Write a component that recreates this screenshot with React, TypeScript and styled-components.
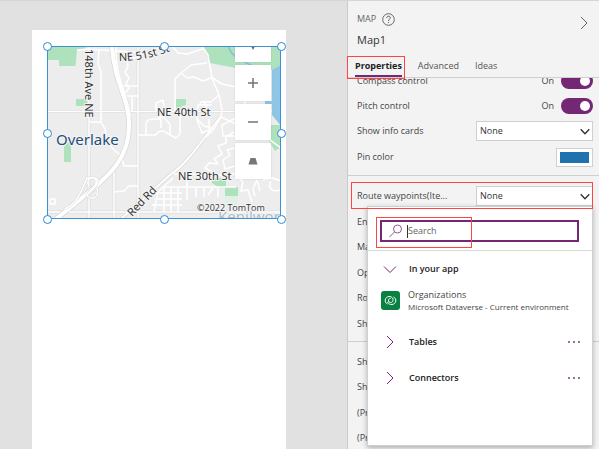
import React from "react";
import styled, { createGlobalStyle, css } from "styled-components";

const GlobalStyle = createGlobalStyle`
  *, *::before, *::after { box-sizing: border-box; }
  body {
    margin: 0;
    font-family: "Open Sans", "Noto Sans", sans-serif;
    font-size: 9px;
    line-height: 16px;
    color: #444;
  }
  button, input, select { font: inherit; color: inherit; margin: 0; }
`;

const purple = "#742774";

const Studio = styled.div`
  display: flex;
  height: 100vh;
  overflow: hidden;
  border-top: 1px solid #d6d6d6;
  background: #e1e1e1;
`;

const Canvas = styled.main`
  flex: 1;
  min-width: 0;
  display: flex;
  padding: 29px 61px 0 32px;
`;

const Screen = styled.section`
  flex: 1;
  min-width: 0;
  padding: 16px 5px 0 15px;
  background: #fff;
`;

const MapControl = styled.div`
  position: relative;
  aspect-ratio: 234 / 173;
`;

const MapView = styled.div`
  position: absolute;
  inset: 0;
  overflow: hidden;
  background: #ededed;
`;

const MapDrawing = styled.svg`
  display: block;
  width: 100%;
  height: 100%;
`;

const MapButtons = styled.div`
  position: absolute;
  top: -20px;
  right: 10px;
  display: flex;
  flex-direction: column;
  gap: 3px;
`;

const MapButton = styled.button`
  display: flex;
  align-items: center;
  justify-content: center;
  width: 36px;
  height: 36px;
  padding: 0;
  border: 0;
  background: #fff;
  box-shadow: 0 0 2px rgba(0, 0, 0, 0.12);
`;

const Outline = styled.div`
  position: absolute;
  inset: 0;
  border: 1px solid #3a92d8;
`;

const Handle = styled.span<{ $x: number; $y: number }>`
  position: absolute;
  left: ${(p) => p.$x}%;
  top: ${(p) => p.$y}%;
  width: 9px;
  height: 9px;
  margin: -4px;
  border: 1px solid #2b88d8;
  border-radius: 50%;
  background: #fff;
`;

const Panel = styled.aside`
  display: flex;
  flex-direction: column;
  width: 252px;
  border-left: 1px solid #cacaca;
  background: #f3f3f3;
`;

const PanelHeader = styled.header`
  display: flex;
  justify-content: space-between;
  padding: 9px 11px 0 9px;
`;

const KindLine = styled.div`
  display: flex;
  align-items: center;
  gap: 6px;
  height: 18px;
  color: #666;
`;

const ControlName = styled.h1`
  margin: 3px 0 0;
  font-size: 11px;
  line-height: 18px;
  font-weight: 400;
  color: #333;
`;

const IconButton = styled.button`
  display: flex;
  align-items: center;
  padding: 0;
  border: 0;
  background: none;
`;

const CollapseButton = styled(IconButton)`
  align-self: flex-start;
  height: 26px;
`;

const Highlight = styled.div`
  position: relative;
  &::after {
    content: "";
    position: absolute;
    z-index: 3;
    border: 1px solid #f44;
    pointer-events: none;
  }
`;

const Tabs = styled.nav`
  display: flex;
  gap: 16px;
  padding: 7px;
  padding-bottom: 0;
  border-bottom: 1px solid #cfcfcf;
`;

const TabHighlight = styled(Highlight)`
  &::after { inset: 0 -3px -2px -8px; }
`;

const Tab = styled.button<{ $active?: boolean }>`
  display: block;
  height: 21px;
  padding: 0;
  border: 0;
  border-bottom: 2px solid ${(p) => (p.$active ? purple : "transparent")};
  background: none;
  line-height: 19px;
  font-weight: ${(p) => (p.$active ? 700 : 400)};
  color: ${(p) => (p.$active ? "#222" : "#555")};
`;

const Scroller = styled.div`
  flex: 1;
  min-height: 0;
  overflow: hidden;
`;

const Group = styled.div<{ $scrolled?: boolean }>`
  padding: ${(p) => (p.$scrolled ? "0" : "7px")} 6px 5px 9px;
  border-bottom: 1px solid #cfcfcf;
  ${(p) => p.$scrolled && css`margin-top: -10px;`}
`;

const Row = styled.div<{ $tall?: boolean }>`
  display: flex;
  align-items: center;
  justify-content: space-between;
  height: ${(p) => (p.$tall ? 26 : 25)}px;
  white-space: nowrap;
`;

const RowHighlight = styled(Highlight)`
  &::after { inset: -1px 0 0 -6px; }
`;

const SwitchSide = styled.span`
  display: flex;
  align-items: center;
  gap: 7px;
`;

const Switch = styled.input`
  appearance: none;
  display: flex;
  align-items: center;
  justify-content: flex-end;
  width: 32px;
  height: 16px;
  padding: 3px;
  border-radius: 8px;
  background: ${purple};
  &::before {
    content: "";
    width: 10px;
    height: 10px;
    border-radius: 50%;
    background: #fff;
  }
`;

const SelectBox = styled.span`
  display: grid;
  width: 117px;
  height: 20px;
  align-items: center;
  > * { grid-area: 1 / 1; }
  > svg { justify-self: end; margin-right: 3px; pointer-events: none; }
`;

const Select = styled.select`
  appearance: none;
  width: 100%;
  height: 20px;
  padding: 0 3px;
  border: 1px solid #cfcfcf;
  border-radius: 0;
  background: #fff;
  color: #333;
`;

const ColorButton = styled.button`
  width: 37px;
  height: 19px;
  padding: 3px;
  border: 1px solid #cfcfcf;
  background: #fff;
  &::before {
    content: "";
    display: block;
    height: 100%;
    background: #1f72ad;
  }
`;

const Flyout = styled.div`
  position: absolute;
  z-index: 2;
  top: 23px;
  left: 10px;
  right: 0;
  height: 240px;
  border: 1px solid #d0d0d0;
  background: #fff;
  box-shadow: 0 2px 5px rgba(0, 0, 0, 0.28);
`;

const SearchArea = styled.div`
  padding: 13px 13px 8px 12px;
  border-bottom: 1px solid #d8d8d8;
`;

const SearchHighlight = styled(Highlight)`
  &::after { inset: -3px auto -6px -4px; width: 96px; }
`;

const SearchField = styled.label`
  display: flex;
  align-items: center;
  height: 22px;
  padding: 0 7px;
  border: 2px solid ${purple};
  > input {
    flex: 1;
    min-width: 0;
    height: 13px;
    padding: 0;
    margin-left: 4px;
    border: 0;
    border-left: 1px solid #333;
    outline: 0;
    background: none;
  }
  > input::placeholder { color: #666; opacity: 1; }
`;

const SourceRow = styled.div`
  display: flex;
  align-items: center;
  height: 36px;
  padding: 0 12px;
`;

const SourceToggle = styled.button`
  display: flex;
  flex: 1;
  align-items: center;
  gap: 11px;
  padding: 0 0 0 2px;
  border: 0;
  background: none;
  font-weight: 600;
  color: #222;
  > svg { width: 16px; }
`;

const TableItem = styled.button`
  display: flex;
  align-items: center;
  gap: 8px;
  width: 100%;
  height: 26px;
  margin-bottom: 11px;
  padding: 0 12px 0 13px;
  border: 0;
  background: none;
  text-align: left;
  line-height: 12px;
  > svg { flex: none; }
`;

const ItemText = styled.span`
  display: flex;
  flex-direction: column;
  white-space: nowrap;
  > small { font-size: 8px; line-height: 11px; }
`;

type ChevronProps = { color?: string; down?: boolean; size?: number; weight?: number };

const Chevron = ({ color = "#333", down = false, size = 14, weight = 1 }: ChevronProps) => (
  <svg
    width={down ? size : 8}
    height={down ? 9 : size}
    viewBox={down ? "0 0 14 9" : "0 0 8 14"}
    fill="none"
    stroke={color}
    strokeWidth={weight}
    aria-hidden="true"
  >
    <path d={down ? "M1 1.500 7 7.500 13 1.500" : "M1 1 7 7 1 13"} />
  </svg>
);

const roads = {
  edge: [
    "M48 111.500H236", "M89 46V219", "M138 46V219", "M48 212H281", "M114 168V219",
  ],
  main: [
    "M48 111.500H236", "M89 46V219", "M138 46V219", "M48 212H281",
    "M77 50 89 49 101 50 119 51 146 53 164 46",
    "M99 49 98 64 101 72V122",
    "M89 122H101L105 129 107 140 112 148 121 156 124 166H138",
    "M138 57 127 59 128 67 125 72 129 78 126 84 129 88 123 96",
    "M123 86H138M125 96H138M132 96V111",
    "M146 135V125Q146 119 153 119H160M138 135H156Q160 127 170 135",
    "M114 192 124 191 129 186H138M114 168V219",
    "M50 199H55V204H50Z",
    "M172 46 178 53 187 54 196 51 203 49",
    "M202 46 208 55 212 78 219 95 222 110 221 117 213 130 206 137",
    "M207 63 191 65 181 73 175 79V111M181 73 187 78 194 77 203 81 211 78",
    "M211 77 222 84 236 87M219 95 211 102H201L197 109V119L204 126 213 128",
    "M221 117 236 124M245 101V111M236 111H272",
    "M197 105H212M204 102 206 108 211 111M156 111V103L163 100 164 107",
    "M161 128V120L158 116 164 118 170 124V134",
    "M180 111V134L176 138 170 135M197 120 202 133 209 130V119",
    "M234 132 226 137V143L218 146 222 154 214 159 218 164 209 163 205 168 214 173 226 177 236 173",
    "M236 118 222 125 223 136H236M235 148 227 150 230 155 223 160 225 169 235 166",
    "M174 174H216M164 187H236M173 178 158 192 154 211M187 173V200",
    "M155 193H182M154 199H182M152 205H182M164 188V212M171 188V212M178 188V212",
    "M196 188V197M204 188V197M213 188 208 195M218 188V197",
    "M238 177 243 182 241 191 248 190 252 202",
    "M257 180 253 189 255 196M257 180 260 191M270 181V188L274 191 281 190",
    "M270 140 281 148M263 180 272 178 281 181",
  ],
};

const redRoad = "M221 116C202 140 188 163 171 174L121 219";
const highway = "M112 46C114 82 129 98 129 124C130 160 106 178 83 197L56 219";
const ramps = "M65 209C78 202 80 194 87 178H95C101 180 97 185 91 191M89 186C86 181 91 173 96 180C98 187 88 190 87 196C94 201 99 197 97 188";

const MapPicture = () => (
  <MapDrawing viewBox="47 46 234 173" preserveAspectRatio="none" role="img" aria-label="Street map of Overlake">
    <g fill="#aee2bd">
      <path d="M48 46H87L84 49 77 50 75.500 66H59V60H48Z" />
      <path d="M76 99H87V106H76ZM64 147 68 142 71 147V162H64Z" />
      <path d="M203 46H281V67L272 70 236 68 210 63Z" />
      <path d="M176 99H186V105L182 106 181 108H176ZM212 178H226V188H220L212 183ZM225 187H238V196H225Z" />
      <path d="M271 125H281V147L275 151 269 141Z" />
    </g>
    <path d="M225 196H238V206H225Z" fill="#e0f0e4" />
    <path d="M272 70 281 65V126L272 115V104H265V101H272Z" fill="#8fc5e5" />
    <path d="M228 46C232 57 240 60 251 65" fill="none" stroke="#83bfe3" strokeWidth="1.500" />
    <g fill="none" stroke="#dcdcdc" strokeWidth="3">
      {roads.edge.map((d) => <path key={d} d={d} />)}
      <path d={redRoad} strokeWidth="3.500" />
    </g>
    <g fill="none" stroke="#fff" strokeWidth="1.500" strokeLinejoin="round">
      {roads.main.map((d) => <path key={d} d={d} />)}
    </g>
    <path d={redRoad} fill="none" stroke="#fff" strokeWidth="2" />
    <g fill="none" strokeLinecap="round">
      <path d={highway} stroke="#dadada" strokeWidth="5.500" />
      <path d={highway} stroke="#fff" strokeWidth="4" />
      <path d="M116 46C114 74 128 95 130 116" stroke="#fff" strokeWidth="1.500" />
      <path d={ramps} stroke="#dadada" strokeWidth="2.500" />
      <path d={ramps} stroke="#fff" strokeWidth="1.500" />
    </g>
    <path id="street51" d="M119 61Q150 61 182 46" fill="none" />
    <g fontFamily="'Noto Sans', sans-serif" fontSize="11" fill="#333" stroke="#f4f4f4" strokeWidth="2" paintOrder="stroke">
      <text><textPath href="#street51">NE 51st St</textPath></text>
      <text transform="translate(85 49) rotate(90)">148th Ave NE</text>
      <text x="157" y="116">NE 40th St</text>
      <text x="178" y="180">NE 30th St</text>
      <text transform="translate(132 217) rotate(-46)">Red Rd</text>
      <text x="56" y="145" fontSize="15" fill="#1f4f7a">Overlake</text>
      <text x="218" y="222" fontSize="15" fill="#a9bbc8">Kenilworth</text>
      <text x="197" y="211" fontFamily="'Open Sans', sans-serif" fontSize="9">©2022 TomTom</text>
    </g>
  </MapDrawing>
);

const handles = [[0, 0], [50, 0], [100, 0], [0, 50], [100, 50], [0, 100], [50, 100], [100, 100]];

const SelectedMap = () => (
  <MapControl>
    <MapView>
      <MapPicture />
      <MapButtons>
        <MapButton aria-label="Compass">
          <svg width="12" height="16" viewBox="0 0 12 16"><path d="M6 0 9 8H3Z" fill="#c33" /><path d="M3 8H9L6 14Z" fill="#666" /></svg>
        </MapButton>
        <MapButton aria-label="Zoom in">
          <svg width="10" height="10" viewBox="0 0 10 10"><path d="M5 0V10M0 5H10" stroke="#737373" strokeWidth="1.500" /></svg>
        </MapButton>
        <MapButton aria-label="Zoom out">
          <svg width="10" height="10" viewBox="0 0 10 10"><path d="M0 5H10" stroke="#737373" strokeWidth="1.500" /></svg>
        </MapButton>
        <MapButton aria-label="Pitch">
          <svg width="10" height="8" viewBox="0 0 10 8"><path d="M2.500 1H7.500L9.500 7.500H.5Z" fill="#777" /></svg>
        </MapButton>
      </MapButtons>
    </MapView>
    <Outline />
    {handles.map(([x, y]) => <Handle key={`${x}-${y}`} $x={x} $y={y} />)}
  </MapControl>
);

const SwitchRow = ({ id, label }: { id: string; label: string }) => (
  <Row>
    <label htmlFor={id}>{label}</label>
    <SwitchSide>On<Switch id={id} type="checkbox" role="switch" defaultChecked /></SwitchSide>
  </Row>
);

const SelectRow = ({ id, label }: { id: string; label: string }) => (
  <Row $tall>
    <label htmlFor={id}>{label}</label>
    <SelectBox>
      <Select id={id}><option>None</option></Select>
      <Chevron down size={10} weight={2} />
    </SelectBox>
  </Row>
);

const More = () => (
  <IconButton aria-label="More options">
    <svg width="12" height="4" viewBox="0 0 12 4" fill={purple}><circle cx="1" cy="2" r=".9" /><circle cx="6" cy="2" r=".9" /><circle cx="11" cy="2" r=".9" /></svg>
  </IconButton>
);

const DataFlyout = () => (
  <Flyout>
    <SearchArea>
      <SearchHighlight>
        <SearchField>
          <svg width="14" height="14" viewBox="0 0 14 14" fill="none" stroke="#94569a" aria-hidden="true"><circle cx="8.500" cy="5" r="4" /><path d="M5.500 8 .5 13" /></svg>
          <input type="text" aria-label="Search" placeholder="Search" />
        </SearchField>
      </SearchHighlight>
    </SearchArea>
    <SourceRow>
      <SourceToggle><Chevron down color={purple} />In your app</SourceToggle>
    </SourceRow>
    <TableItem>
      <svg width="19" height="19" viewBox="0 0 19 19" fill="none" stroke="#fff" aria-hidden="true">
        <rect width="19" height="19" rx="3" fill="#088142" stroke="none" />
        <path d="M6.500 13C3 11.500 3.500 6 8 5.500C11 5.300 13 8 11.500 10.500C10.500 12.200 8 11.800 7.500 10C7.200 8.500 8.200 7.300 9.500 7.500" />
        <path d="M12.500 6C16 7.500 15.500 13 11 13.500C9 13.700 7.500 12.800 6.500 11" />
      </svg>
      <ItemText>Organizations<small>Microsoft Dataverse - Current environment</small></ItemText>
    </TableItem>
    {["Tables", "Connectors"].map((name) => (
      <SourceRow key={name}>
        <SourceToggle><Chevron color={purple} />{name}</SourceToggle>
        <More />
      </SourceRow>
    ))}
  </Flyout>
);

const routeRows = ["Enable routing", "Maintain order", "Optimize route", "Route mode", "Show shapes"];
const shapeRows = ["Show labels", "Show drawing", "(Preview) Delete", "(Preview) Export"];

export default function App() {
  return (
    <Studio>
      <GlobalStyle />
      <Canvas>
        <Screen><SelectedMap /></Screen>
      </Canvas>
      <Panel>
        <PanelHeader>
          <div>
            <KindLine>
              MAP
              <IconButton aria-label="Help">
                <svg width="13" height="13" viewBox="0 0 13 13" fill="none" stroke="#666">
                  <circle cx="6.500" cy="6.500" r="5.800" />
                  <path d="M4.700 5C4.700 2.500 8.500 2.600 8.300 4.900C8.200 6 6.500 6.400 6.500 8M6.500 9V10" />
                </svg>
              </IconButton>
            </KindLine>
            <ControlName>Map1</ControlName>
          </div>
          <CollapseButton aria-label="Collapse panel"><Chevron color="#666" /></CollapseButton>
        </PanelHeader>
        <Tabs>
          <TabHighlight><Tab $active>Properties</Tab></TabHighlight>
          <Tab>Advanced</Tab>
          <Tab>Ideas</Tab>
        </Tabs>
        <Scroller>
          <Group $scrolled>
            <SwitchRow id="compass" label="Compass control" />
            <SwitchRow id="pitch" label="Pitch control" />
            <SelectRow id="cards" label="Show info cards" />
            <Row $tall>
              <label htmlFor="pin">Pin color</label>
              <ColorButton id="pin" />
            </Row>
          </Group>
          <Group>
            <RowHighlight>
              <SelectRow id="waypoints" label="Route waypoints(Ite..." />
              <DataFlyout />
            </RowHighlight>
            {routeRows.map((label, i) => <Row key={label} $tall={i % 2 === 1}>{label}</Row>)}
          </Group>
          <Group>
            {shapeRows.map((label, i) => <Row key={label} $tall={i % 2 === 1}>{label}</Row>)}
          </Group>
        </Scroller>
      </Panel>
    </Studio>
  );
}
